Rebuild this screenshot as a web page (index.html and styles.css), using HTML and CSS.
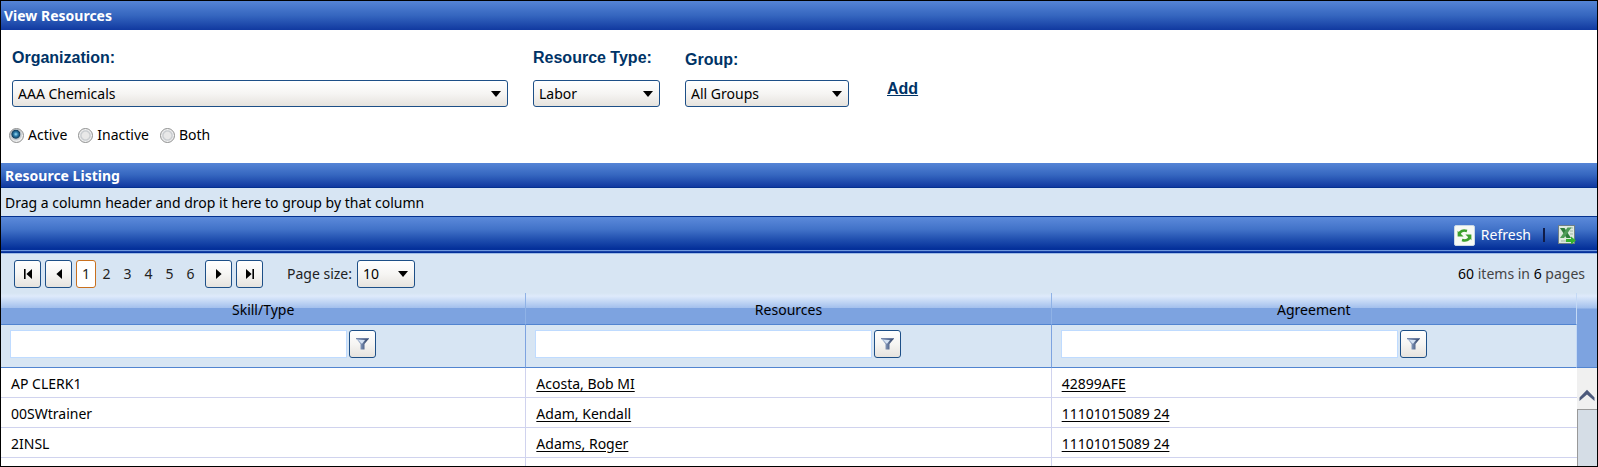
FILE: index.html
```html
<!DOCTYPE html>
<html lang="en">
<head>
<meta charset="utf-8">
<title>View Resources</title>
<link rel="stylesheet" href="styles.css">
</head>
<body>
<svg class="defs" width="0" height="0" aria-hidden="true">
  <defs>
    <linearGradient id="steel" x1="0" y1="0" x2="1" y2="0">
      <stop offset="0" stop-color="#c3d3ea"/><stop offset="0.5" stop-color="#6a7ea3"/><stop offset="1" stop-color="#26365a"/>
    </linearGradient>
    <symbol id="funnel" viewBox="0 0 13 12">
      <path d="M0 0.5H13L8.5 6V11.5H4.5V6Z" fill="url(#steel)"/>
      <path d="M0 0.7H13" stroke="#5f739b" stroke-width="1"/>
      <path d="M2.5 2H9L6.3 5.5H5.3Z" fill="#d5e2f3"/>
    </symbol>
  </defs>
</svg>
<div class="page">
  <h1 class="title-bar">View Resources</h1>

  <form class="criteria">
    <div class="fields">
      <div class="field field-org">
        <label class="field-label" for="org">Organization:</label>
        <span class="drop"><select id="org"><option>AAA Chemicals</option></select></span>
      </div>
      <div class="field field-type">
        <label class="field-label" for="type">Resource Type:</label>
        <span class="drop"><select id="type"><option>Labor</option></select></span>
      </div>
      <div class="field field-group">
        <label class="field-label" for="group">Group:</label>
        <span class="drop"><select id="group"><option>All Groups</option></select></span>
      </div>
      <a class="add" href="#">Add</a>
    </div>
    <div class="radios">
      <label class="radio"><input type="radio" name="status" checked>Active</label>
      <label class="radio"><input type="radio" name="status">Inactive</label>
      <label class="radio"><input type="radio" name="status">Both</label>
    </div>
  </form>

  <h2 class="list-bar">Resource Listing</h2>
  <div class="group-hint">Drag a column header and drop it here to group by that column</div>

  <div class="toolbar">
    <button type="button" class="tool">
      <svg width="21" height="21" viewBox="0 0 21 21" aria-hidden="true">
        <rect x="0.5" y="0.5" width="20" height="20" rx="1.5" fill="#f7faf4" stroke="#c9d8e6"/>
        <g fill="none" stroke="#3da02d" stroke-width="2.6">
          <path d="M5.5 9C6 6 9 4.8 13 6"/>
          <path d="M15.5 12C15 15 12 16.2 8 15"/>
        </g>
        <path d="M3.6 5.8V11.6H9.6Z" fill="#3da02d"/>
        <path d="M17.4 15.2V9.4H11.4Z" fill="#3da02d"/>
      </svg>
      Refresh
    </button>
    <span class="separator"></span>
    <button type="button" class="tool" aria-label="Export to Excel">
      <svg width="18" height="20" viewBox="0 0 18 20" aria-hidden="true">
        <rect x="0.5" y="0.5" width="16" height="18" fill="#dfeadf" stroke="#6f7f86"/>
        <path d="M12 3H15M12 6H15M12 9H15M3 16H9" stroke="#9db7a3"/>
        <path d="M2 3H6.5L13 13H8.5Z" fill="#2e7d3c"/>
        <path d="M13.5 2.5H9.5L2 13H6Z" fill="#4f9c58"/>
        <path d="M8 14H13V11.5L18 15.5L13 19.5V17H8Z" fill="#35b32f"/>
      </svg>
    </button>
  </div>

  <div class="pager">
    <div class="pager-nav">
      <button type="button" class="push" aria-label="First page"><svg width="10" height="10" viewBox="0 0 10 10"><path d="M1 0H2.6V10H1ZM9 0V10L3.4 5Z"/></svg></button>
      <button type="button" class="push" aria-label="Previous page"><svg width="10" height="10" viewBox="0 0 10 10"><path d="M8 0V10L2.4 5Z"/></svg></button>
      <div class="pages">
        <a class="num current" href="#">1</a><a class="num" href="#">2</a><a class="num" href="#">3</a><a class="num" href="#">4</a><a class="num" href="#">5</a><a class="num" href="#">6</a>
      </div>
      <button type="button" class="push" aria-label="Next page"><svg width="10" height="10" viewBox="0 0 10 10"><path d="M2 0V10L7.6 5Z"/></svg></button>
      <button type="button" class="push" aria-label="Last page"><svg width="10" height="10" viewBox="0 0 10 10"><path d="M9 0H7.4V10H9ZM1 0V10L6.6 5Z"/></svg></button>
    </div>
    <label class="size-label" for="size">Page size:</label>
    <span class="drop drop-size"><select id="size"><option>10</option></select></span>
    <span class="count"><b>60</b> items in <b>6</b> pages</span>
  </div>

  <div class="grid">
    <table class="table">
      <thead>
        <tr class="heads"><th scope="col">Skill/Type</th><th scope="col">Resources</th><th scope="col">Agreement</th></tr>
        <tr class="filters">
          <td><div class="filter"><input type="text" aria-label="Filter Skill/Type"><button type="button" class="push" aria-label="Filter Skill/Type options"><svg width="13" height="12"><use href="#funnel"/></svg></button></div></td>
          <td><div class="filter"><input type="text" aria-label="Filter Resources"><button type="button" class="push" aria-label="Filter Resources options"><svg width="13" height="12"><use href="#funnel"/></svg></button></div></td>
          <td><div class="filter"><input type="text" aria-label="Filter Agreement"><button type="button" class="push" aria-label="Filter Agreement options"><svg width="13" height="12"><use href="#funnel"/></svg></button></div></td>
        </tr>
      </thead>
      <tbody>
        <tr><td>AP CLERK1</td><td><a href="#">Acosta, Bob MI</a></td><td><a href="#">42899AFE</a></td></tr>
        <tr><td>00SWtrainer</td><td><a href="#">Adam, Kendall</a></td><td><a href="#">11101015089 24</a></td></tr>
        <tr><td>2INSL</td><td><a href="#">Adams, Roger</a></td><td><a href="#">11101015089 24</a></td></tr>
        <tr class="rest"><td></td><td></td><td></td></tr>
      </tbody>
    </table>
    <div class="scroll">
      <div class="scroll-head"></div>
      <div class="scroll-up"><svg width="16" height="12" viewBox="0 0 16 12"><path d="M0.5 8.5L8 0.8L15.5 8.5V12L8 5.6L0.5 12Z" fill="#4d5a7c"/></svg></div>
      <div class="scroll-thumb"></div>
    </div>
  </div>
</div>
</body>
</html>
```
FILE: styles.css
```css
* { box-sizing: border-box; }

body {
  margin: 0;
  background: #fff;
  color: #000;
  font: 14px/20px "Noto Sans", "Open Sans", sans-serif;
}

button, input, select { margin: 0; font: inherit; color: inherit; }

.defs { position: absolute; }

.page {
  display: flex;
  flex-direction: column;
  min-height: 100vh;
  border: 1px solid #000;
}

.title-bar, .list-bar {
  margin: 0;
  padding: 0 4px;
  color: #fff;
  font-size: 14px;
  font-weight: 700;
  background: linear-gradient(#5584d6, #3566bf 50%, #1139a0);
}
.title-bar { padding-left: 3px; line-height: 29px; }
.list-bar { padding-top: 2px; line-height: 22px; border-bottom: 1px solid #04318f; }

.criteria { padding: 18px 8px; }
.fields { display: flex; align-items: flex-end; padding-left: 3px; }
.field { display: flex; flex-direction: column; gap: 12px; }
.field-label, .add {
  color: #003366;
  font: bold 16px/20px "Liberation Sans", Arial, sans-serif;
}
.field-org { width: 496px; margin-right: 25px; }
.field-type { width: 127px; margin-right: 25px; }
.field-group { width: 164px; margin-right: 38px; gap: 10px; }
.add { margin-bottom: 8px; }

.drop { position: relative; display: block; }
.drop select {
  appearance: none;
  display: block;
  width: 100%;
  height: 27px;
  padding: 0 24px 0 5px;
  border: 1px solid #1d4f87;
  border-radius: 3px;
  background: linear-gradient(#fff, #f6f5f3 50%, #e6e3de);
}
.drop::after {
  content: "";
  position: absolute;
  right: 7px;
  top: 11px;
  width: 10px;
  height: 6px;
  background: #000;
  clip-path: polygon(0 0, 100% 0, 50% 100%);
  pointer-events: none;
}

.radios { display: flex; gap: 11px; margin-top: 18px; }
.radio { display: flex; align-items: center; gap: 4px; }
.radio input {
  appearance: none;
  width: 15px;
  height: 15px;
  border: 1px solid #8e8f8f;
  border-radius: 50%;
  background: radial-gradient(circle, #e8e8e8 35%, #c4c8cc 50%, #f2f2f2 65%);
}
.radio input:checked {
  background: radial-gradient(circle at 45% 40%, #9fe0f5 0, #2b7cab 20%, #12405f 38%, #b4bcc2 45%, #f0f0f0 65%);
}

.group-hint {
  padding: 5px 4px 3px;
  background: #d7e5f3;
}

.toolbar {
  display: flex;
  align-items: center;
  justify-content: flex-end;
  height: 38px;
  padding-right: 21px;
  border-top: 1px solid #04318f;
  border-bottom: 1px solid #9fbce6;
  background: linear-gradient(#5c8ada, #4172c8 35%, #1d4cad 65%, #04309a 88%, #04309a 91%, #6f97dc 92%, #6f97dc 95%, #04309a 96%);
}
.tool {
  display: flex;
  align-items: center;
  gap: 6px;
  padding: 0;
  border: 0;
  background: none;
  color: #fff;
}
.separator { width: 2px; height: 14px; margin: 0 13px 0 12px; background: #101c48; }

.pager {
  display: flex;
  align-items: center;
  padding: 6px 12px 5px 13px;
  background: #d7e5f3;
}
.pager-nav { display: flex; align-items: center; gap: 4px; }
.push {
  display: flex;
  align-items: center;
  justify-content: center;
  width: 27px;
  height: 28px;
  padding: 0;
  border: 1px solid #1d4f87;
  border-radius: 3px;
  background: linear-gradient(#fff, #f6f5f3 50%, #e6e3de);
}
.pages { display: flex; }
.num {
  width: 21px;
  border: 1px solid transparent;
  border-radius: 3px;
  color: #222;
  line-height: 26px;
  text-align: center;
  text-decoration: none;
}
.current { width: 20px; border-color: #c9701e; background: #fff; }
.size-label { margin: 0 5px 0 24px; color: #222; }
.drop-size { width: 58px; }
.drop-size select { height: 28px; }
.count { margin-left: auto; color: #444; }
.count b { color: #000; font-weight: 400; }

.grid { display: flex; flex: 1; }
.table {
  flex: 1;
  table-layout: fixed;
  border-collapse: separate;
  border-spacing: 0;
}
.table th {
  height: 32px;
  padding: 3px 0 0;
  border-right: 1px solid #8fb2e6;
  border-bottom: 1px solid #5184d0;
  background: linear-gradient(#d7e5f3, #deeafb 10%, #a3c0ed 48%, #7da3e0 50%, #7da3e0);
  font-weight: 400;
}
.table td {
  height: 30px;
  padding: 2px 10px 0;
  border-right: 1px solid #d0d3ee;
  border-bottom: 1px solid #d0d3ee;
}
.table a { color: #000; text-underline-offset: 2px; }
.table .filters td {
  height: 43px;
  padding: 0 9px 4px;
  border-right-color: #7da3e0;
  border-bottom-color: #5184d0;
  background: #d7e5f3;
}
.filter { display: flex; align-items: center; gap: 2px; }
.filter input {
  width: 337px;
  height: 28px;
  padding: 0 4px;
  border: 1px solid #bfdbff;
  background: #fff;
}
.table .rest td { height: auto; padding: 0; border-bottom: 0; }
.table th:last-child, .table .filters td:last-child { border-right-color: #c4d9f5; }
.table tbody td:last-child { border-right: 0; }

.scroll { display: flex; flex-direction: column; width: 20px; }
.scroll-head {
  height: 75px;
  border-bottom: 1px solid #5184d0;
  background: linear-gradient(#d7e5f3, #deeafb 3px, #a3c0ed 15px, #7da3e0 16px);
}
.scroll-up {
  display: flex;
  align-items: flex-end;
  justify-content: center;
  height: 41px;
  padding-bottom: 8px;
  background: #f0f0f0;
}
.scroll-thumb {
  flex: 1;
  border: 1px solid #999;
  border-width: 1px 0 0 1px;
  background: #d5dde6;
}
```
